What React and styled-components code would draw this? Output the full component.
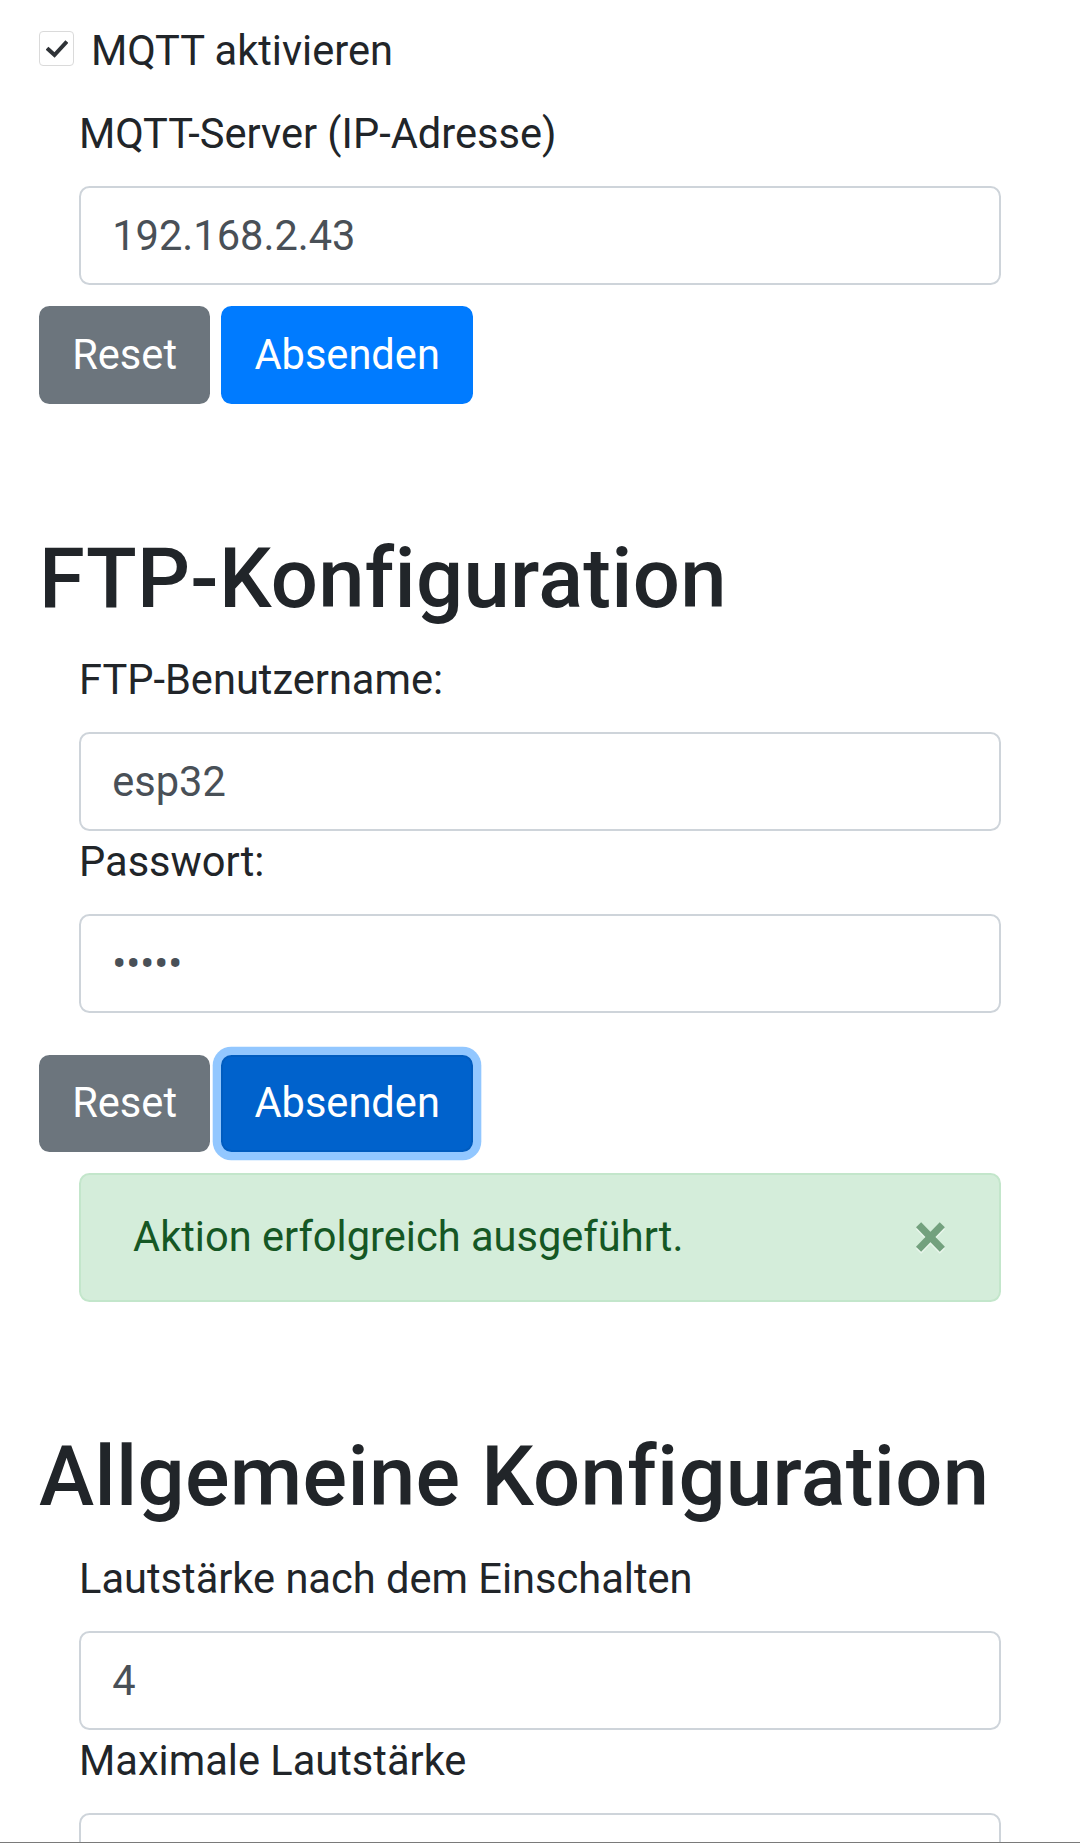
import React from "react";
import styled, { createGlobalStyle } from "styled-components";

const GlobalStyle = createGlobalStyle`
  html {
    font-size: 41.6px;
  }
  body {
    margin: 0;
    background: #fff;
    color: #212529;
    font-family: Roboto, "Noto Sans", "Liberation Sans", sans-serif;
    font-size: 1rem;
    line-height: 1.5;
  }
  * {
    box-sizing: border-box;
  }
`;

const Page = styled.div`
  padding: 20px 39px 0 39px;
`;

const Form = styled.form`
  margin: 0;
`;

const Heading = styled.h2`
  margin: 125px 0 0.5rem 0;
  font-size: 2rem;
  font-weight: 500;
  line-height: 1.2;
  letter-spacing: 0.3px;
`;

const Check = styled.div`
  position: relative;
  padding-left: 1.25rem;
  margin-bottom: 0.5rem;
`;

const CheckBox = styled.span`
  position: absolute;
  left: 0;
  top: 11px;
  width: 35px;
  height: 35px;
  border: 1.5px solid #dadada;
  border-radius: 4px;
  background: #fff;
  display: flex;
  align-items: center;
  justify-content: center;
`;

const CheckLabel = styled.label`
  display: inline-block;
`;

const Group = styled.div`
  margin: 0 40px;
`;

const Label = styled.label`
  display: inline-block;
  margin-bottom: 0.5rem;
`;

const Input = styled.input`
  display: block;
  width: 100%;
  height: calc(1.5em + 0.75rem + 5.2px);
  padding: 0.375rem 0.75rem;
  font-family: inherit;
  font-size: 1rem;
  line-height: 1.5;
  color: #495057;
  background: #fff;
  border: 2.6px solid #ced4da;
  border-radius: 0.25rem;
  outline: none;
`;

const Actions = styled.div`
  display: flex;
  gap: 11px;
  margin-top: ${({ $wide }) => ($wide ? "1rem" : "0.5rem")};
`;

const variants = {
  secondary: { bg: "#6c757d", border: "#6c757d", ring: "none" },
  primary: { bg: "#007bff", border: "#007bff", ring: "none" },
  focused: {
    bg: "#0062cc",
    border: "#005cbf",
    ring: "0 0 0 0.2rem rgba(38, 143, 255, 0.5)",
  },
};

const Button = styled.button`
  display: inline-block;
  padding: 0.375rem 0.75rem;
  font-family: inherit;
  font-size: 1rem;
  font-weight: 400;
  line-height: 1.5;
  color: #fff;
  background: ${({ $variant }) => variants[$variant].bg};
  border: 2.6px solid ${({ $variant }) => variants[$variant].border};
  border-radius: 0.25rem;
  box-shadow: ${({ $variant }) => variants[$variant].ring};
`;

const Alert = styled.div`
  position: relative;
  margin: 0.5rem 40px 0 40px;
  padding: 0.75rem 4rem 0.75rem 1.25rem;
  color: #155724;
  background: #d4edda;
  border: 2.6px solid #c3e6cb;
  border-radius: 0.25rem;
`;

const Close = styled.button`
  position: absolute;
  top: 0;
  right: 0;
  padding: 0.75rem 1.25rem;
  font-family: inherit;
  font-size: 1.5rem;
  font-weight: 700;
  line-height: 1;
  color: inherit;
  opacity: 0.5;
  text-shadow: 0 2px 0 #fff;
  background: transparent;
  border: 0;
`;

const NavEdge = styled.div`
  position: fixed;
  left: 0;
  right: 0;
  bottom: 0;
  height: 1px;
  background: #7a7a7a;
`;

const Tick = () => (
  <svg width="22" height="18" viewBox="0 0 22 18">
    <path
      d="M2.5 9.5 L8.5 15 L19.5 3"
      fill="none"
      stroke="#2f3337"
      strokeWidth="4"
      strokeLinecap="square"
    />
  </svg>
);

const Field = ({ label, value, type = "text" }) => (
  <>
    <Label>{label}</Label>
    <Input type={type} defaultValue={value} />
  </>
);

const App = () => {
  return (
    <Page>
      <GlobalStyle />
      <Form>
        <Check>
          <CheckBox>
            <Tick />
          </CheckBox>
          <CheckLabel>MQTT aktivieren</CheckLabel>
        </Check>
        <Group>
          <Field label="MQTT-Server (IP-Adresse)" value="192.168.2.43" />
        </Group>
        <Actions>
          <Button type="button" $variant="secondary">Reset</Button>
          <Button type="button" $variant="primary">Absenden</Button>
        </Actions>
      </Form>

      <Heading>FTP-Konfiguration</Heading>
      <Form>
        <Group>
          <Field label="FTP-Benutzername:" value="esp32" />
          <Field label="Passwort:" value="esp32" type="password" />
        </Group>
        <Actions $wide>
          <Button type="button" $variant="secondary">Reset</Button>
          <Button type="button" $variant="focused">Absenden</Button>
        </Actions>
        <Alert>
          Aktion erfolgreich ausgeführt.
          <Close type="button">×</Close>
        </Alert>
      </Form>

      <Heading>Allgemeine Konfiguration</Heading>
      <Form>
        <Group>
          <Field label="Lautstärke nach dem Einschalten" value="4" />
          <Field label="Maximale Lautstärke" value="" />
        </Group>
      </Form>
      <NavEdge />
    </Page>
  );
};

export default App;
